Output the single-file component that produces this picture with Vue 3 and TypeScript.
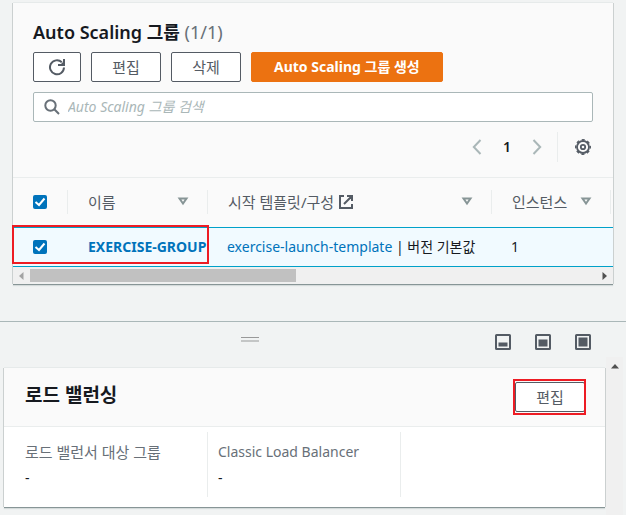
<script setup lang="ts">
import { computed, ref } from 'vue'

interface Group {
  name: string
  template: string
  version: string
  instances: number
  selected: boolean
}

const groups = ref<Group[]>([
  { name: 'EXERCISE-GROUP', template: 'exercise-launch-template', version: '버전 기본값', instances: 1, selected: true },
])
const query = ref('')
const selectedCount = computed(() => groups.value.filter((g) => g.selected).length)
const allSelected = computed({
  get: () => selectedCount.value === groups.value.length,
  set: (value: boolean) => groups.value.forEach((g) => (g.selected = value)),
})

const details = [
  { label: '로드 밸런서 대상 그룹', value: '-', korean: true },
  { label: 'Classic Load Balancer', value: '-', korean: false },
]

const layouts = [
  { label: '작은 패널', y: 8.5, height: 4 },
  { label: '중간 패널', y: 5.5, height: 7 },
  { label: '전체 패널', y: 3.5, height: 9 },
]
</script>

<template>
  <div class="page">
    <main class="list-area">
      <section class="card">
        <header class="card-head">
          <h1>Auto Scaling 그룹 <span class="count">({{ selectedCount }}/{{ groups.length }})</span></h1>
          <div class="actions">
            <button type="button" class="btn refresh" aria-label="새로 고침">
              <svg width="18" height="18" viewBox="0 0 18 18" fill="none" stroke="currentColor" stroke-width="2">
                <path d="M16 9.500A7 7 0 1 1 13.800 4.200" />
                <path d="M17 1v7h-7V6h3l2-2V1z" fill="currentColor" stroke="none" />
              </svg>
            </button>
            <button type="button" class="btn">편집</button>
            <button type="button" class="btn">삭제</button>
            <button type="button" class="btn primary">Auto Scaling 그룹 생성</button>
          </div>
          <label class="search">
            <svg width="16" height="16" viewBox="0 0 16 16" fill="none" stroke="currentColor" stroke-width="2">
              <circle cx="6.5" cy="6.5" r="5.2" />
              <path d="M10.3 10.3L15 15" />
            </svg>
            <input v-model="query" type="text" placeholder="Auto Scaling 그룹 검색" aria-label="Auto Scaling 그룹 검색" />
          </label>
          <nav class="pager" aria-label="페이지">
            <button type="button" class="icon-btn muted" aria-label="이전">
              <svg width="10" height="16" viewBox="0 0 10 16" fill="none" stroke="currentColor" stroke-width="2">
                <path d="M8.500 1L1.800 8l6.700 7" />
              </svg>
            </button>
            <span class="page-number">1</span>
            <button type="button" class="icon-btn muted" aria-label="다음">
              <svg width="10" height="16" viewBox="0 0 10 16" fill="none" stroke="currentColor" stroke-width="2">
                <path d="M1.500 1l6.700 7-6.700 7" />
              </svg>
            </button>
            <span class="pager-settings">
              <button type="button" class="icon-btn" aria-label="설정">
                <svg width="16" height="16" viewBox="0 0 16 16" fill="none" stroke="currentColor">
                  <circle cx="8" cy="8" r="6" stroke-width="1.8" />
                  <circle cx="8" cy="8" r="7.300" stroke-width="1.400" stroke-dasharray="3.100 2.634" stroke-dashoffset="1.550" />
                  <circle cx="8" cy="8" r="2.200" stroke-width="1.800" />
                </svg>
              </button>
            </span>
          </nav>
        </header>

        <div class="table-area">
          <div class="table-scroll">
            <table>
              <colgroup>
                <col class="col-check" />
                <col class="col-name" />
                <col class="col-template" />
                <col class="col-count" />
                <col />
              </colgroup>
              <thead>
                <tr>
                  <th><div class="head-cell"><input v-model="allSelected" type="checkbox" aria-label="모두 선택" /></div></th>
                  <th>
                    <div class="head-cell">
                      <span>이름</span>
                      <svg class="sort" width="12" height="9" viewBox="0 0 12 9"><path d="M2.500 1.500h7L6 6.500z" /></svg>
                    </div>
                  </th>
                  <th>
                    <div class="head-cell">
                      <span class="with-icon">시작 템플릿/구성
                        <svg width="16" height="16" viewBox="0 0 16 16" fill="none" stroke="currentColor" stroke-width="2">
                          <path d="M6 2H2v12h12v-4M9 2h5v5M14 2L6 10" />
                        </svg>
                      </span>
                      <svg class="sort" width="12" height="9" viewBox="0 0 12 9"><path d="M2.500 1.500h7L6 6.500z" /></svg>
                    </div>
                  </th>
                  <th>
                    <div class="head-cell">
                      <span>인스턴스</span>
                      <svg class="sort" width="12" height="9" viewBox="0 0 12 9"><path d="M2.500 1.500h7L6 6.500z" /></svg>
                    </div>
                  </th>
                  <th></th>
                </tr>
              </thead>
              <tbody>
                <tr v-for="group in groups" :key="group.name">
                  <td class="check"><input v-model="group.selected" type="checkbox" :aria-label="group.name" /></td>
                  <td class="name"><a href="#">{{ group.name }}</a></td>
                  <td><a href="#">{{ group.template }}</a> | {{ group.version }}</td>
                  <td>{{ group.instances }}</td>
                  <td></td>
                </tr>
              </tbody>
            </table>
          </div>
          <div class="highlight row-highlight"></div>
          <div class="scrollbar">
            <svg width="5" height="8" viewBox="0 0 5 8"><path d="M4.500 0v8L0 4z" fill="#a3a3a3" /></svg>
            <div class="track"><div class="thumb"></div></div>
            <svg width="5" height="8" viewBox="0 0 5 8"><path d="M.5 0v8L5 4z" fill="#505050" /></svg>
          </div>
        </div>
      </section>
    </main>

    <section class="split">
      <div class="split-bar">
        <div class="grip"></div>
        <div class="layouts">
          <button v-for="layout in layouts" :key="layout.label" type="button" class="icon-btn" :aria-label="layout.label">
            <svg width="16" height="16" viewBox="0 0 16 16">
              <rect x="1" y="1" width="14" height="14" rx="0.5" fill="none" stroke="currentColor" stroke-width="2" />
              <rect x="3.5" :y="layout.y" width="9" :height="layout.height" fill="currentColor" />
            </svg>
          </button>
        </div>
      </div>
      <div class="split-body">
        <section class="card detail">
          <header class="detail-head">
            <h2>로드 밸런싱</h2>
            <div class="edit-wrap">
              <button type="button" class="btn">편집</button>
              <div class="highlight button-highlight"></div>
            </div>
          </header>
          <dl>
            <div v-for="item in details" :key="item.label">
              <dt :class="{ korean: item.korean }">{{ item.label }}</dt>
              <dd>{{ item.value }}</dd>
            </div>
          </dl>
        </section>
        <div class="v-scrollbar">
          <svg width="8" height="5" viewBox="0 0 8 5"><path d="M0 4.500h8L4 0z" fill="#505050" /></svg>
        </div>
      </div>
    </section>
  </div>
</template>

<style>
body {
  background: #f1f3f3;
}
</style>

<style scoped>
.page {
  font-family: "Noto Sans", "Noto Sans CJK KR", sans-serif;
  font-size: 14px;
  line-height: 22px;
  color: #16191f;
  overflow: hidden;
}
.page * {
  box-sizing: border-box;
}
button,
input {
  font: inherit;
  margin: 0;
}
a {
  color: #0073bb;
  text-decoration: none;
}
.list-area {
  padding: 3px 13px 37px;
}
.card {
  background: #fafafa;
  box-shadow: 0 -1px 0 #e6eaea, -1px 0 0 #cbd0d0, 1px 0 0 #cbd0d0, 0 1px 0 #879596, 0 2px 1px #d5dbdb;
}
.card-head {
  padding: 17px 20px 15px;
  border-bottom: 1px solid #eaeded;
}
h1,
h2 {
  margin: 0;
  line-height: 24px;
}
h1 {
  margin-bottom: 8px;
  font-size: 18px;
  font-weight: 600;
}
h2 {
  padding-bottom: 4px;
  font-size: 19px;
  font-weight: 700;
}
.count {
  color: #687078;
  font-weight: 400;
}
.actions {
  display: flex;
  gap: 10px;
  margin-bottom: 10px;
}
.btn {
  height: 30px;
  padding: 0 20px;
  border: 1px solid #545b64;
  border-radius: 2px;
  background: #fff;
  color: #545b64;
  font-size: 15px;
  font-weight: 400;
  line-height: 26px;
  min-width: 70px;
  white-space: nowrap;
}
.refresh {
  min-width: 48px;
  padding: 0;
  display: flex;
  align-items: center;
  justify-content: center;
}
.primary {
  padding: 0 22px;
  background: #ec7211;
  border-color: #ec7211;
  color: #fff;
  font-size: 14px;
  font-weight: 700;
}
.search {
  display: flex;
  align-items: center;
  gap: 8px;
  height: 30px;
  padding: 0 10px;
  border: 1px solid #aab7b8;
  border-radius: 2px;
  background: #fff;
  color: #687078;
}
.search input {
  flex: 1;
  min-width: 0;
  padding: 0;
  border: 0;
  outline: 0;
  background: none;
}
.search input::placeholder {
  color: #aab7b8;
  font-style: italic;
}
.pager {
  display: flex;
  justify-content: flex-end;
  align-items: center;
  margin-top: 10px;
  height: 30px;
}
.icon-btn {
  display: flex;
  padding: 0;
  border: 0;
  background: none;
  color: #545b64;
}
.muted {
  color: #aab7b8;
}
.page-number {
  width: 50px;
  text-align: center;
  font-weight: 600;
}
.pager-settings {
  display: flex;
  align-items: center;
  height: 30px;
  margin-left: 15px;
  padding: 0 2px 0 17px;
  border-left: 1px solid #eaeded;
}
.table-area {
  position: relative;
}
.table-scroll {
  overflow: hidden;
}
table {
  width: 100%;
  table-layout: fixed;
  border-collapse: separate;
  border-spacing: 0;
}
.col-check {
  width: 55px;
}
.col-name {
  width: 140px;
}
.col-template {
  width: 284px;
}
.col-count {
  width: 119px;
}
th,
td {
  padding: 0;
  text-align: left;
  white-space: nowrap;
}
th {
  height: 49px;
  padding-bottom: 2px;
  font-size: 15px;
  font-weight: 400;
  color: #545b64;
}
.head-cell {
  display: flex;
  align-items: center;
  justify-content: space-between;
  height: 24px;
  padding: 0 18px 0 20px;
  border-right: 1px solid #eaeded;
}
.with-icon {
  display: flex;
  align-items: center;
  gap: 4px;
}
.sort {
  fill: none;
  stroke: #879596;
  stroke-width: 2;
}
td {
  height: 40px;
  padding-left: 19px;
  background: #f1faff;
  border-top: 1px solid #00a1c9;
  border-bottom: 1px solid #00a1c9;
}
td.check,
td.name {
  padding-left: 20px;
}
td.name {
  font-weight: 700;
}
input[type='checkbox'] {
  display: block;
  appearance: none;
  width: 14px;
  height: 14px;
  border-radius: 2px;
  background: #0073bb;
}
input[type='checkbox']:checked {
  background-image: url("data:image/svg+xml,%3Csvg xmlns='http://www.w3.org/2000/svg' viewBox='0 0 14 14'%3E%3Cpath d='M2.500 7l3.500 3 5.500-6.500' fill='none' stroke='white' stroke-width='2'/%3E%3C/svg%3E");
}
.highlight {
  position: absolute;
  border: 2px solid #ed1c24;
  pointer-events: none;
}
.row-highlight {
  left: -1px;
  top: 47px;
  width: 197px;
  height: 39px;
}
.scrollbar {
  display: flex;
  align-items: center;
  gap: 6px;
  height: 17px;
  padding: 0 6px;
  background: #f0f0f0;
}
.track {
  flex: 1;
}
.thumb {
  width: 47%;
  height: 13px;
  background: #c1c1c1;
}
.split {
  border-top: 1px solid #aab7b8;
}
.split-bar {
  display: grid;
  grid-template-columns: 18px 1fr;
  align-items: center;
  height: 35px;
  padding: 5px 35px 0 241px;
}
.grip {
  height: 5px;
  margin-bottom: 5px;
  border-top: 1px solid #999;
  border-bottom: 2px solid #c4c6c6;
}
.layouts {
  display: flex;
  justify-content: flex-end;
  gap: 24px;
}
.split-body {
  display: flex;
  padding: 0 3px 0 4px;
}
.detail {
  flex: 1;
  margin: 11px 0 8px;
  background: #fff;
}
.detail-head {
  display: flex;
  align-items: center;
  justify-content: space-between;
  height: 59px;
  padding: 0 20px 0 21px;
  background: #fafafa;
  border-bottom: 1px solid #eaeded;
}
.edit-wrap {
  position: relative;
}
.button-highlight {
  inset: -3px -1px -3px -2px;
}
dl {
  display: flex;
  margin: 0;
  padding: 5px 0 10px 11px;
}
dl > div {
  width: 193px;
  height: 65px;
  padding: 9px 10px;
  border-right: 1px solid #eaeded;
}
dt {
  color: #687078;
}
.korean {
  font-size: 15px;
}
dd {
  margin: 4px 0 0;
}
.v-scrollbar {
  width: 17px;
  margin-left: 1px;
  padding-top: 7px;
  background: #f0f0f0;
  display: flex;
  justify-content: center;
}
</style>
